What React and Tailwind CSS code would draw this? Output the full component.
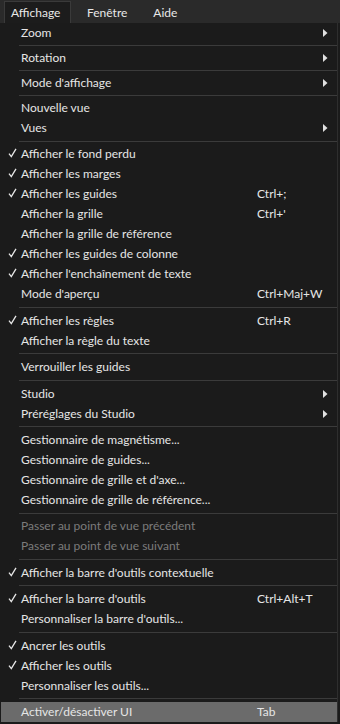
import React from "react";

// separators: "s" for the short ones at the top, "sep" for the rest
const items = [
  { label: "Zoom", sub: true },
  "s",
  { label: "Rotation", sub: true },
  "s",
  { label: "Mode d'affichage", sub: true },
  "s",
  { label: "Nouvelle vue" },
  { label: "Vues", sub: true },
  "sep",
  { label: "Afficher le fond perdu", checked: true },
  { label: "Afficher les marges", checked: true },
  { label: "Afficher les guides", checked: true, shortcut: "Ctrl+;" },
  { label: "Afficher la grille", shortcut: "Ctrl+'" },
  { label: "Afficher la grille de référence" },
  { label: "Afficher les guides de colonne", checked: true },
  { label: "Afficher l'enchaînement de texte", checked: true },
  { label: "Mode d'aperçu", shortcut: "Ctrl+Maj+W" },
  "sep",
  { label: "Afficher les règles", checked: true, shortcut: "Ctrl+R" },
  { label: "Afficher la règle du texte" },
  "sep",
  { label: "Verrouiller les guides" },
  "sep",
  { label: "Studio", sub: true },
  { label: "Préréglages du Studio", sub: true },
  "sep",
  { label: "Gestionnaire de magnétisme..." },
  { label: "Gestionnaire de guides..." },
  { label: "Gestionnaire de grille et d'axe..." },
  { label: "Gestionnaire de grille de référence..." },
  "sep",
  { label: "Passer au point de vue précédent", disabled: true },
  { label: "Passer au point de vue suivant", disabled: true },
  "sep",
  { label: "Afficher la barre d'outils contextuelle", checked: true },
  "sep",
  { label: "Afficher la barre d'outils", checked: true, shortcut: "Ctrl+Alt+T" },
  { label: "Personnaliser la barre d'outils..." },
  "sep",
  { label: "Ancrer les outils", checked: true },
  { label: "Afficher les outils", checked: true },
  { label: "Personnaliser les outils..." },
  "sep",
  { label: "Activer/désactiver UI", shortcut: "Tab", active: true },
];

const Check = () => (
  <svg width="9" height="10" viewBox="0 0 9 10">
    <path d="M1 5.6 L3.3 8.6 L8 0.8" fill="none" stroke="#e8e8e8" strokeWidth="1.3" />
  </svg>
);

const Arrow = () => (
  <svg width="5" height="8" viewBox="0 0 5 8">
    <path d="M0 0 L4.5 4 L0 8 Z" fill="#e0e0e0" />
  </svg>
);

const Row = ({ item }) => (
  <div
    className={
      "grid grid-cols-[20px_236px_66px_1fr] items-center h-[20px] leading-[20px] whitespace-nowrap " +
      (item.active ? "bg-[#6b6b6b] " : "") +
      (item.disabled ? "text-[#7b7b7b]" : "text-[#e6e6e6]")
    }
  >
    <div className="flex justify-end pr-[4px] pb-[2px]">{item.checked && <Check />}</div>
    <span>{item.label}</span>
    <span>{item.shortcut}</span>
    <div className="flex">{item.sub && <Arrow />}</div>
  </div>
);

const Separator = ({ short }) => (
  <div className={(short ? "h-[5px]" : "h-[6.4px]") + " flex items-center pl-[18px]"}>
    <div className="h-px w-full bg-[#3b3b3b]" />
  </div>
);

export default function App() {
  return (
    <div
      className="w-[340px] h-[724px] bg-[#1b1b1b] overflow-hidden text-[12px]"
      style={{ fontFamily: "Lato, 'Noto Sans', sans-serif" }}
    >
      {/* menu bar */}
      <div className="flex h-[23px] bg-[#2a2a2a] text-[#e8e8e8]">
        <div className="ml-[4px] w-[67px] h-[22px] mt-[1px] bg-[#1c1c1c] border-t border-l border-r border-[#3a3a3a] pl-[6px] leading-[21px]">
          Affichage
        </div>
        <div className="ml-[16px] leading-[26px]">Fenêtre</div>
        <div className="ml-[26px] leading-[26px]">Aide</div>
      </div>

      {/* dropdown */}
      <div className="ml-[1px] w-[337px] bg-[#1b1b1b] border-r border-[#2e2e2e]">
        {items.map((item, i) =>
          typeof item === "string" ? (
            <Separator key={i} short={item === "s"} />
          ) : (
            <Row key={i} item={item} />
          )
        )}
      </div>
    </div>
  );
}
